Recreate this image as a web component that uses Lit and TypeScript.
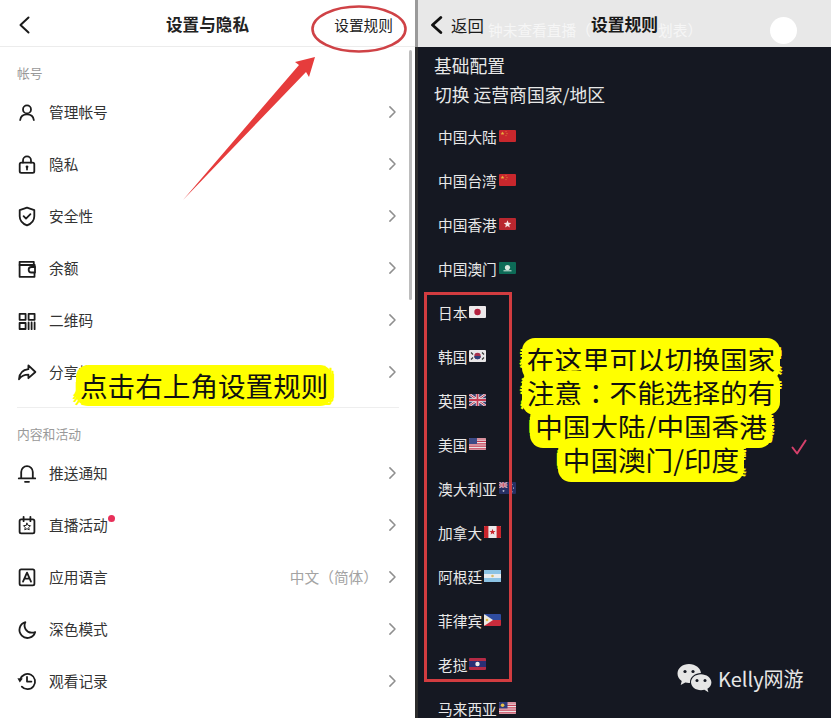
import { LitElement, html, css, svg } from "lit";
import { customElement } from "lit/decorators.js";

const ICONS: Record<string, unknown> = {
  person: svg`<circle cx="12" cy="9.4" r="4"/><path d="M5.2 20c.5-3.6 3.2-5.6 6.800-5.600s6.300 2 6.800 5.600"/>`,
  lock: svg`<rect x="4.700" y="10.600" width="14.600" height="10.200" rx="1.600"/><path d="M8 10.600V8.400a4 4 0 0 1 8 0v2.200"/><circle cx="12" cy="14.800" r="1.400" class="solid"/><path d="M12 15v2.600"/>`,
  shield: svg`<path d="M12 3.600l7.300 2.600v6c0 4.600-3.200 7.600-7.300 9.200-4.100-1.600-7.300-4.600-7.300-9.200v-6z"/><path d="M8.600 12.200l2.400 2.400 4.400-4.400"/>`,
  wallet: svg`<path d="M18.800 9V5.800H4.600v15h14.900v-4"/><path d="M4.600 9h15.100v2"/><path d="M20 11h-3.600a2.600 2.600 0 0 0 0 5.500H20z"/>`,
  qr: svg`<rect x="4.600" y="5.800" width="6" height="6"/><rect x="13.600" y="5.800" width="6" height="6"/><rect x="4.600" y="15" width="6" height="6"/><path d="M13.600 14.400v6.800M16.600 14.400v6.800M19.600 14.400v6.800"/>`,
  share: svg`<path d="M13.400 5.400l7 6.600-7 6.200v-3.600c-4.200 0-7 1.200-9.400 4.600.4-5.400 3.800-9.400 9.400-10z"/>`,
  bell: svg`<path d="M6.200 17v-6a5.800 5.800 0 0 1 11.600 0v6"/><path d="M3.800 17.400h16.400"/><path d="M10 20.800h4"/>`,
  calendar: svg`<rect x="4.600" y="6.400" width="14.800" height="14" rx="1.600"/><path d="M8.600 3.800v4.400M15.400 3.800v4.400"/><path class="thin" d="M12 10.200l1.100 2.200 2.400.3-1.700 1.700.4 2.400-2.200-1.100-2.200 1.100.4-2.400-1.700-1.700 2.400-.3z"/>`,
  lang: svg`<rect x="4.600" y="4.400" width="14.800" height="16" rx="1.600"/><path d="M8 16.600l4-9 4 9M9.500 13.600h5"/>`,
  moon: svg`<path d="M10.400 5.200a8 8 0 1 0 9.800 9.800c-1 .5-2 .7-3 .7a7.200 7.200 0 0 1-6.800-10.500z"/>`,
  history: svg`<path d="M5.200 10.400a7.600 7.600 0 1 1 1.600 7.200"/><path class="solid" d="M2.400 9.200l5.400.4-3 3.800z"/><path d="M12 8v4.600h4.400"/>`,
};

interface MenuRow { icon: string; label: string; value?: string; dot?: boolean }

const ACCOUNT: MenuRow[] = [
  { icon: "person", label: "管理帐号" },
  { icon: "lock", label: "隐私" },
  { icon: "shield", label: "安全性" },
  { icon: "wallet", label: "余额" },
  { icon: "qr", label: "二维码" },
  { icon: "share", label: "分享帐号主页" },
];
const CONTENT: MenuRow[] = [
  { icon: "bell", label: "推送通知" },
  { icon: "calendar", label: "直播活动", dot: true },
  { icon: "lang", label: "应用语言", value: "中文（简体）" },
  { icon: "moon", label: "深色模式" },
  { icon: "history", label: "观看记录" },
];

const star = (cx: number, cy: number, r: number, fill: string) => {
  const pts: string[] = [];
  for (let i = 0; i < 10; i++) {
    const a = -Math.PI / 2 + (i * Math.PI) / 5;
    const q = i % 2 ? r * 0.42 : r;
    pts.push(`${(cx + q * Math.cos(a)).toFixed(2)},${(cy + q * Math.sin(a)).toFixed(2)}`);
  }
  return svg`<polygon points=${pts.join(" ")} fill=${fill}/>`;
};

const unionJack = svg`<rect width="17" height="12" fill="#39406f"/><path d="M0 0l17 12M17 0L0 12" stroke="#e8e0e4" stroke-width="2.6"/><path d="M0 0l17 12M17 0L0 12" stroke="#c43a52" stroke-width="1"/><path d="M8.5 0v12M0 6h17" stroke="#e8e0e4" stroke-width="3.4"/><path d="M8.5 0v12M0 6h17" stroke="#c43a52" stroke-width="1.8"/>`;

const FLAGS: Record<string, unknown> = {
  cn: svg`<rect width="17" height="12" fill="#c8272d"/>${star(3.5, 3.5, 2, "#e9b73c")}${star(7, 1.8, .7, "#e9b73c")}${star(8, 3.6, .7, "#e9b73c")}${star(7, 5.8, .7, "#e9b73c")}`,
  hk: svg`<rect width="17" height="12" fill="#b9272f"/>${star(8.5, 6.2, 4, "#f6e6e6")}`,
  mo: svg`<rect width="17" height="12" fill="#0d6b57"/><circle cx="8.5" cy="5.6" r="2.6" fill="#d8e8e0"/><path d="M4.5 8.800h8" stroke="#d8e8e0" stroke-width="1"/>`,
  jp: svg`<rect width="17" height="12" fill="#ece8ea"/><circle cx="8.5" cy="6" r="3.2" fill="#b3203e"/>`,
  kr: svg`<rect width="17" height="12" fill="#e8e6e8"/><circle cx="8.5" cy="6" r="3.2" fill="#a8304c"/><path d="M5.300 6a3.200 3.200 0 0 0 6.400 0z" fill="#2f3f78"/><path d="M2 2.500l2 2M13 9.500l2-2M2 9.500l2-2M13 2.500l2 2" stroke="#333" stroke-width="1.100"/>`,
  uk: unionJack,
  us: svg`<rect width="17" height="12" fill="#ece4e6"/><path d="M0 1h17M0 3.400h17M0 5.800h17M0 8.200h17M0 10.800h17" stroke="#c33a52" stroke-width="1.200"/><rect width="8" height="6" fill="#3d4a86"/>`,
  au: svg`<rect width="17" height="12" fill="#262f63"/><svg width="8.500" height="6" viewBox="0 0 17 12">${unionJack}</svg>${star(4.5, 9, 1.3, "#e8e8f0")}${star(13, 2.5, .9, "#e8e8f0")}${star(11, 6, .9, "#e8e8f0")}${star(14.5, 6, .9, "#e8e8f0")}${star(13, 9.8, .9, "#e8e8f0")}`,
  ca: svg`<rect width="17" height="12" fill="#ece8ea"/><rect width="4.400" height="12" fill="#c8242c"/><rect x="12.600" width="4.400" height="12" fill="#c8242c"/>${star(8.5, 6, 3.2, "#c8242c")}`,
  ar: svg`<rect width="17" height="12" fill="#e8ecf0"/><rect width="17" height="4" fill="#8cc3e4"/><rect y="8" width="17" height="4" fill="#8cc3e4"/><circle cx="8.5" cy="6" r="1.300" fill="#d9bd68"/>`,
  ph: svg`<rect width="17" height="6" fill="#2f4ca0"/><rect y="6" width="17" height="6" fill="#c92c3c"/><polygon points="0,0 9,6 0,12" fill="#ece8e0"/><circle cx="3" cy="6" r="1.300" fill="#e3bd45"/>`,
  la: svg`<rect width="17" height="12" fill="#b52a45"/><rect y="3" width="17" height="6" fill="#2b2f75"/><circle cx="8.5" cy="6" r="2.200" fill="#eee"/>`,
  my: svg`<rect width="17" height="12" fill="#ece4e6"/><path d="M0 1h17M0 3.400h17M0 5.800h17M0 8.200h17M0 10.800h17" stroke="#c6435a" stroke-width="1.200"/><rect width="8.500" height="6.400" fill="#2d3a7c"/><circle cx="3.600" cy="3.200" r="1.800" fill="#e7c04a"/>`,
};

const REGIONS: { name: string; flag: string; selected?: boolean }[] = [
  { name: "中国大陆", flag: "cn" },
  { name: "中国台湾", flag: "cn" },
  { name: "中国香港", flag: "hk" },
  { name: "中国澳门", flag: "mo" },
  { name: "日本", flag: "jp" },
  { name: "韩国", flag: "kr" },
  { name: "英国", flag: "uk" },
  { name: "美国", flag: "us", selected: true },
  { name: "澳大利亚", flag: "au" },
  { name: "加拿大", flag: "ca" },
  { name: "阿根廷", flag: "ar" },
  { name: "菲律宾", flag: "ph" },
  { name: "老挝", flag: "la" },
  { name: "马来西亚", flag: "my" },
];

const chevronRight = html`<svg class="chev" width="7" height="12" viewBox="0 0 7 12"><path d="M.9 .9L6 6 .9 11.100"/></svg>`;

@customElement("app-root")
export class AppRoot extends LitElement {
  static styles = css`
    :host {
      display: block;
      position: relative;
      width: 831px;
      height: 718px;
      overflow: hidden;
      background: #3a3a3a;
      font-family: "Noto Sans CJK SC", "Noto Sans", sans-serif;
    }
    .page { display: flex; height: 718px; }
    .left { width: 415px; height: 718px; background: #fff; flex: none; position: relative; overflow: hidden; }
    .gap { width: 3px; flex: none; background: linear-gradient(#9a9a9a 0 47px, #2c2c2c 47px); }
    .right { flex: 1; min-width: 0; height: 718px; background: #151822; overflow: hidden; position: relative; }

    .lhead { height: 47px; border-bottom: 1px solid #ececec; box-sizing: border-box; display: flex; align-items: center; justify-content: space-between; padding: 3px 22px 0 18px; position: relative; }
    .back { flex: none; fill: none; stroke: #1a1a1a; stroke-width: 2; stroke-linecap: round; stroke-linejoin: round; }
    .ltitle { position: absolute; left: 0; right: 0; top: 12px; line-height: 24px; text-align: center; font-size: 16.6px; font-weight: 700; color: #222; }
    .rule { font-size: 14.7px; color: #222; line-height: 22px; margin-left: -1px; }

    .label { font-size: 12.8px; color: #999; line-height: 18px; padding: 17px 0 4px 17px; }
    .label.second { padding: 17px 0 4px 17px; }
    .row { height: 52px; display: flex; align-items: center; padding: 0 19px 0 15px; }
    .icon { width: 24px; height: 24px; flex: none; fill: none; stroke: #1c1c1c; stroke-width: 1.8; stroke-linejoin: round; stroke-linecap: round; }
    .icon .solid { fill: #1c1c1c; stroke: none; }
    .icon .thin { stroke-width: 1; }
    .name { margin-left: 10px; font-size: 14.7px; color: #333; position: relative; line-height: 22px; }
    .dot { position: absolute; left: 100%; top: 1px; margin-left: 0; width: 7px; height: 7px; border-radius: 50%; background: #e8305a; }
    .value { margin-left: auto; font-size: 14.7px; color: #a3a3a3; line-height: 22px; margin-right: 11px; }
    .value + .chev { margin-left: 0; }
    .chev { flex: none; margin-left: auto; fill: none; stroke: #8f8f8f; stroke-width: 1.5; stroke-linecap: round; stroke-linejoin: round; }
    .rule-line { height: 1px; background: #eeeeee; margin: 9px 16px 0 17px; }
    .scroll { position: absolute; left: 409px; top: 50px; width: 3px; height: 250px; background: #bdbdbd; border-radius: 2px; }

    .rhead { height: 47px; background: #e8e8e8; position: relative; display: flex; align-items: center; box-sizing: border-box; padding: 3px 0 0 12px; }
    .ghost { position: absolute; top: 19px; font-size: 14.7px; line-height: 22px; color: #f6f6f6; white-space: nowrap; }
    .ghost.a { left: 70px; }
    .ghost.b { left: 240px; }
    .circle { position: absolute; left: 352px; top: 17px; width: 27px; height: 27px; border-radius: 50%; background: #fff; }
    .backb { flex: none; fill: none; stroke: #111; stroke-width: 2.8; stroke-linecap: round; stroke-linejoin: round; position: relative; }
    .ret { position: relative; margin-left: 8px; font-size: 16.4px; color: #1a1a1a; line-height: 24px; }
    .rtitle { position: absolute; left: 173px; top: 12px; font-size: 16.8px; font-weight: 700; color: #1a1a1a; line-height: 24px; }

    .intro { padding: 4px 0 5px 16px; font-size: 17.8px; line-height: 29px; color: #e8e8e8; }
    .region { height: 44px; display: flex; align-items: center; padding: 0 24px 0 20px; font-size: 14.7px; color: #e9e9e9; white-space: nowrap; }
    .flag { margin-left: 2px; flex: none; border-radius: 1px; }
    .check { margin-left: auto; margin-top: 5px; flex: none; fill: none; stroke: #d5406b; stroke-width: 2; stroke-linecap: round; stroke-linejoin: round; }

    .overlay { position: absolute; left: 0; top: 0; pointer-events: none; }
    .redbox { position: absolute; left: 424px; top: 292px; width: 88px; height: 390px; box-sizing: border-box; border: 3px solid #d23c40; }
    .note { position: absolute; font-size: 27.6px; line-height: 33.4px; color: #111; white-space: nowrap; }
    .note.one { left: 80px; top: 369px; }
    .note.two { left: 524px; top: 343px; width: 254px; display: flex; flex-direction: column; align-items: center; }
    .note span {
      display: block;
      background: #ffff00;
      border-radius: 8px;
      box-shadow: 0 0 0 4px #ff0;
      text-shadow:
        -8.5px 0 0 #ff0, 8.5px 0 0 #ff0,
        -8px -3px 0 #ff0, 8px -3px 0 #ff0, -8px 3px 0 #ff0, 8px 3px 0 #ff0;
    }
    .note.one span {
      text-shadow:
        0 -8px 0 #ff0, 0 6px 0 #ff0, -8.5px 0 0 #ff0, 8.5px 0 0 #ff0,
        -6px -6px 0 #ff0, 6px -6px 0 #ff0, -6px 6px 0 #ff0, 6px 6px 0 #ff0,
        -8px -3px 0 #ff0, 8px -3px 0 #ff0, -8px 3px 0 #ff0, 8px 3px 0 #ff0;
    }
    .note.two span { box-shadow: 0 0 0 5px #ff0; }
    .note i { font-style: normal; font-family: "Noto Sans CJK TC", "Noto Sans CJK SC", sans-serif; }
    .mark { position: absolute; left: 677px; top: 663px; display: flex; align-items: center; gap: 5px; color: #e6e6e6; font-size: 20px; line-height: 32px; }
    .mark svg { flex: none; }
  `;

  private menu(rows: MenuRow[]) {
    return rows.map(
      (r) => html`<div class="row">
        <svg class="icon" viewBox="0 0 24 24">${ICONS[r.icon]}</svg>
        <span class="name">${r.label}${r.dot ? html`<i class="dot"></i>` : ""}</span>
        ${r.value ? html`<span class="value">${r.value}</span>` : ""}
        ${chevronRight}
      </div>`
    );
  }

  render() {
    return html`
      <div class="page">
        <section class="left">
          <header class="lhead">
            <svg class="back" width="12" height="18" viewBox="0 0 12 18"><path d="M10.500 1.500L2.500 9l8 7.500"/></svg>
            <div class="ltitle">设置与隐私</div>
            <span class="rule">设置规则</span>
          </header>
          <div class="label">帐号</div>
          ${this.menu(ACCOUNT)}
          <div class="rule-line"></div>
          <div class="label second">内容和活动</div>
          ${this.menu(CONTENT)}
          <div class="scroll"></div>
        </section>
        <div class="gap"></div>
        <section class="right">
          <header class="rhead">
            <span class="ghost a">钟未查看直播（</span>
            <span class="ghost b">划表）</span>
            <span class="circle"></span>
            <svg class="backb" width="13" height="18" viewBox="0 0 13 18"><path d="M10.800 1.500L2.500 9l8.300 7.500"/></svg>
            <span class="ret">返回</span>
            <span class="rtitle">设置规则</span>
          </header>
          <div class="intro">基础配置<br />切换 运营商国家/地区</div>
          ${REGIONS.map(
            (r) => html`<div class="region">
              <span>${r.name}</span>
              <svg class="flag" width="17" height="12" viewBox="0 0 17 12">${FLAGS[r.flag]}</svg>
              ${r.selected
                ? html`<svg class="check" width="16" height="16" viewBox="0 0 16 16"><path d="M1.500 8.500l4.600 6L14.600 1.500"/></svg>`
                : ""}
            </div>`
          )}
        </section>
      </div>

      <svg class="overlay" width="831" height="718" viewBox="0 0 831 718">
        <ellipse cx="359" cy="29" rx="46.500" ry="22.500" fill="none" stroke="#cf4246" stroke-width="2.600"/>
        <polygon points="315,57 295,62 299,65 183,200 306,72 309,77" fill="#e63c3c"/>
      </svg>
      <div class="redbox"></div>
      <div class="note one"><span>点击右上角设置规则</span></div>
      <div class="note two">
        <span>在这里可以切换国家</span>
        <span>注意<i>：</i>不能选择的有</span>
        <span>中国大陆/中国香港</span>
        <span>中国澳门/印度</span>
      </div>
      <div class="mark">
        <svg width="36" height="32" viewBox="0 0 36 32">
          <path fill="#e6e6e6" d="M12 1C5.600 1 .5 5.200 .5 10.600c0 3 1.600 5.600 4.200 7.400l-1 4 4.600-2.400c1.200.3 2.400.5 3.700.5 6.400 0 12-4.200 12-9.500S18.400 1 12 1z"/>
          <circle cx="8" cy="8.500" r="1.600" fill="#151822"/><circle cx="16" cy="8.500" r="1.600" fill="#151822"/>
          <path fill="#151822" d="M24 10c-6 0-11 4-11 9.200s5 9.200 11 9.200c1 0 2.400-.2 3.400-.5l4.600 3.100-1-4c2.800-1.800 4.600-4.700 4.600-7.800C35.600 14 30 10 24 10z"/>
          <path fill="#e6e6e6" d="M24 11.200c-5.400 0-10 3.600-10 8s4.600 8 10 8c1.200 0 2.300-.2 3.400-.5l4 2.600-1-3.500c2.600-1.500 4-3.900 4-6.600 0-4.400-5-8-10.400-8z"/>
          <circle cx="20" cy="17.500" r="1.500" fill="#151822"/><circle cx="28" cy="17.500" r="1.500" fill="#151822"/>
        </svg>
        <span>Kelly网游</span>
      </div>
    `;
  }
}
